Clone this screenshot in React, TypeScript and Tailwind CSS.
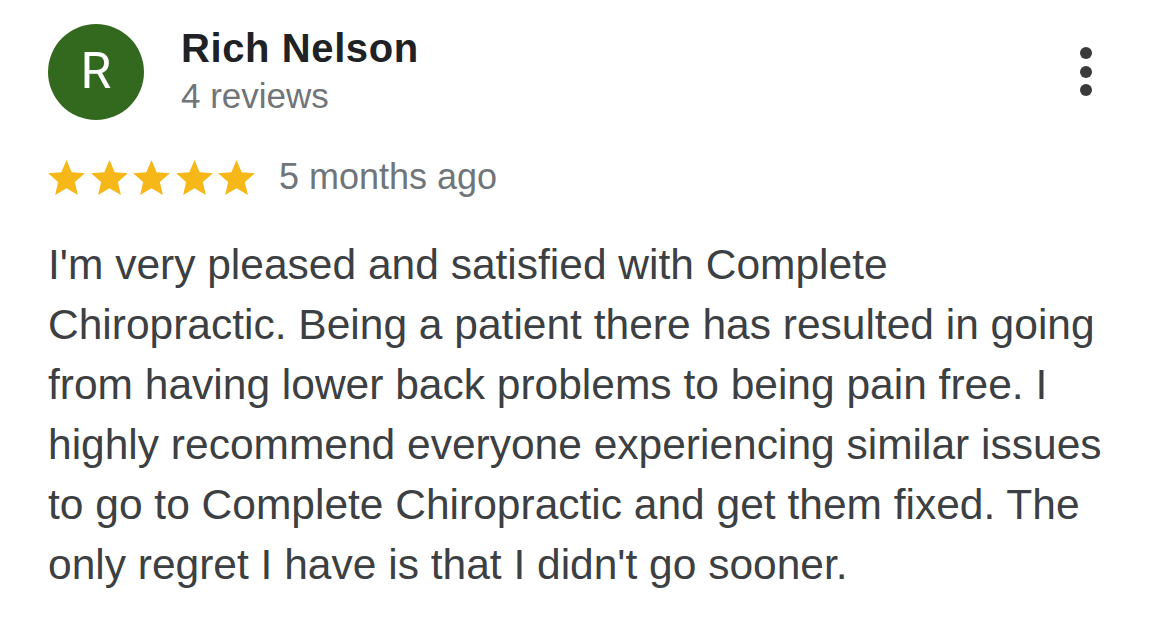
const lines = [
  "I'm very pleased and satisfied with Complete",
  "Chiropractic. Being a patient there has resulted in going",
  "from having lower back problems to being pain free. I",
  "highly recommend everyone experiencing similar issues",
  "to go to Complete Chiropractic and get them fixed. The",
  "only regret I have is that I didn't go sooner.",
];

const Star = () => (
  <svg width="37" height="35" viewBox="2 2 20 19" className="shrink-0">
    <path
      d="M12 17.27L18.18 21l-1.64-7.03L22 9.24l-7.19-.61L12 2 9.19 8.63 2 9.24l5.46 4.73L5.82 21z"
      fill="#f5b818"
    />
  </svg>
);

export default function App() {
  return (
    <div
      className="w-[1170px] h-[619px] bg-white pl-[48px] pt-[24px] overflow-hidden"
      style={{ fontFamily: '"Liberation Sans", Arial, sans-serif' }}
    >
      {/* header */}
      <div className="flex items-start">
        <div className="w-[96px] h-[96px] rounded-full bg-[#33691f] flex items-center justify-center shrink-0">
          <span className="text-white text-[50px] leading-none font-['Roboto'] pb-[2px]">R</span>
        </div>
        <div className="ml-[37px] pt-[2px]">
          <div className="text-[40px] leading-[44px] font-bold text-[#202124] tracking-[0.6px]">
            Rich Nelson
          </div>
          <div className="mt-[6px] text-[35px] leading-[40px] text-[#70757a]">4 reviews</div>
        </div>
        <div className="ml-auto mr-[78px] mt-[23px] flex flex-col gap-[6.5px]">
          <span className="w-[12px] h-[12px] rounded-full bg-[#3a3a3c]" />
          <span className="w-[12px] h-[12px] rounded-full bg-[#3a3a3c]" />
          <span className="w-[12px] h-[12px] rounded-full bg-[#3a3a3c]" />
        </div>
      </div>

      {/* rating */}
      <div className="mt-[37px] flex items-center h-[40px]">
        <div className="flex gap-[5.5px]">
          <Star />
          <Star />
          <Star />
          <Star />
          <Star />
        </div>
        <span className="ml-[24px] text-[36px] leading-[40px] text-[#70757a]">5 months ago</span>
      </div>

      {/* body */}
      <div className="mt-[38px] text-[42.5px] leading-[60px] text-[#3c4043]">
        {lines.map((l) => (
          <div key={l} className="whitespace-nowrap">
            {l}
          </div>
        ))}
      </div>
    </div>
  );
}
